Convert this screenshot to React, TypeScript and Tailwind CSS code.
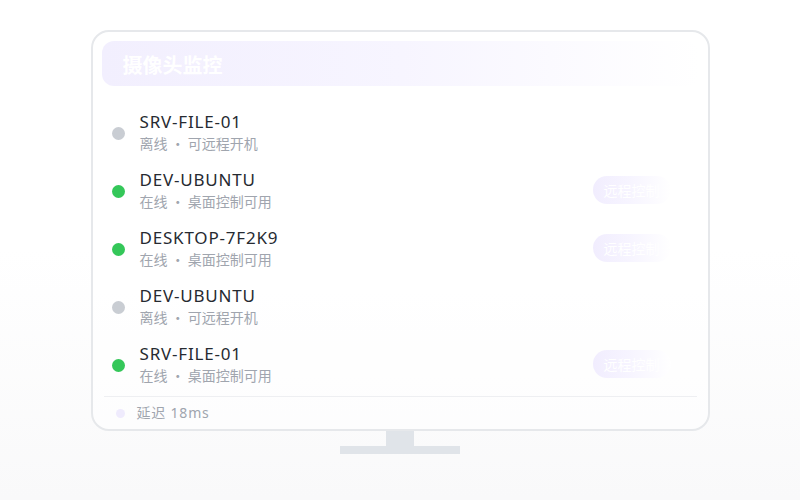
import React from 'react'

interface Host {
  name: string
  online: boolean
}

const hosts: Host[] = [
  { name: 'SRV-FILE-01', online: false },
  { name: 'DEV-UBUNTU', online: true },
  { name: 'DESKTOP-7F2K9', online: true },
  { name: 'DEV-UBUNTU', online: false },
  { name: 'SRV-FILE-01', online: true },
]

const cjk = { fontFamily: '"Noto Sans CJK SC", "Noto Sans", sans-serif' }

function HostRow({ host }: { host: Host }) {
  return (
    <div className="flex items-center h-[58px] pl-[10px] pr-[28px]">
      <div className="flex items-start gap-[15px]">
        <span
          className={`mt-[16px] w-[13px] h-[13px] rounded-full ${
            host.online ? 'bg-[#34c759]' : 'bg-[#c9cdd3]'
          }`}
        />
        <div className="flex flex-col">
          <span className="text-[17px] leading-[22px] tracking-[0.8px] text-[#262a31]">{host.name}</span>
          <span className="text-[14px] leading-[20px] text-[#a0a5ae]" style={cjk}>
            {host.online ? '在线 · 桌面控制可用' : '离线 · 可远程开机'}
          </span>
        </div>
      </div>
      {host.online && (
        <button
          className="ml-auto h-[28px] w-[78px] rounded-full pl-[11px] text-left text-[14px] text-white bg-gradient-to-r from-[#f1edfe] via-[#f7f5ff] to-white"
          style={cjk}
        >
          远程控制
        </button>
      )}
    </div>
  )
}

export default function App() {
  return (
    <div
      className="h-[500px] w-full bg-gradient-to-b from-white via-white to-[#f9f9fa] pt-[30px] flex flex-col items-center"
      style={{ fontFamily: '"Noto Sans", "Noto Sans CJK SC", sans-serif' }}
    >
      <div className="w-[619px] h-[401px] rounded-[18px] border-2 border-[#e6e8eb] bg-white/60 px-[9px] pt-[9px]">
        <div className="h-[45px] rounded-[12px] bg-gradient-to-r from-[#f2effe] via-[#f7f5ff] to-white flex items-center pl-[21px] pt-[3px]">
          <span className="text-[20px] font-bold text-white" style={cjk}>摄像头监控</span>
        </div>
        <div className="mt-[17px] flex flex-col">
          {hosts.map((h, i) => (
            <HostRow key={i} host={h} />
          ))}
        </div>
        <div className="mt-[3px] mx-[2px] border-t border-[#eeeff2] flex items-center gap-[12px] pl-[12px] pt-[6px]">
          <span className="w-[9px] h-[9px] rounded-full bg-[#efebfd]" />
          <span className="text-[14px] leading-[20px] tracking-[0.8px] text-[#a0a5ae]">延迟 18ms</span>
        </div>
      </div>
      <div className="w-[28px] h-[15px] bg-[#e0e4e9]" />
      <div className="w-[120px] h-[8px] bg-[#e0e4e9]" />
    </div>
  )
}
